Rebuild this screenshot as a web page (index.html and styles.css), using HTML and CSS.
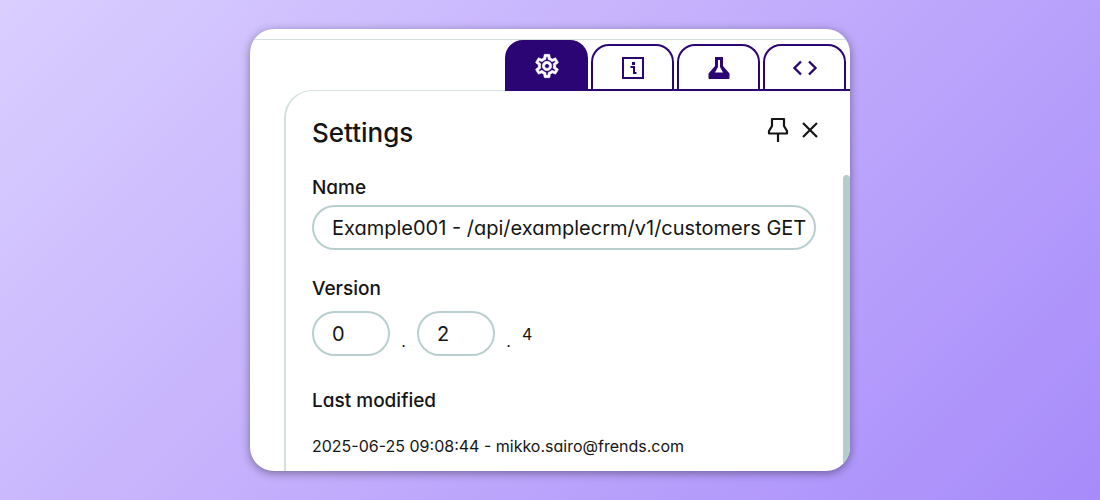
FILE: index.html
```html
<!DOCTYPE html>
<html lang="en">
<head>
  <meta charset="UTF-8">
  <title>Settings</title>
  <meta name="viewport" content="width=device-width, initial-scale=1">
  <link rel="stylesheet" href="styles.css">
</head>
<body>
  <main class="card">
    <nav class="top">
      <div class="tabs">
        <button class="tab active" type="button" aria-label="Settings">
          <svg width="28" height="28" viewBox="0 0 24 24" fill="currentColor" stroke="currentColor" stroke-width=".5" stroke-linejoin="round"><path d="M19.43 12.98c.04-.32.07-.64.07-.98s-.03-.66-.07-.98l2.11-1.65c.19-.15.24-.42.12-.64l-2-3.46c-.09-.16-.26-.25-.44-.25-.06 0-.12.01-.17.03l-2.49 1c-.52-.4-1.08-.73-1.69-.98l-.38-2.65C14.46 2.18 14.25 2 14 2h-4c-.25 0-.46.18-.49.42l-.38 2.65c-.61.25-1.17.59-1.69.98l-2.49-1c-.06-.02-.12-.03-.18-.03-.17 0-.34.09-.43.25l-2 3.46c-.13.22-.07.49.12.64l2.11 1.65c-.04.32-.07.65-.07.98s.03.66.07.98l-2.11 1.65c-.19.15-.24.42-.12.64l2 3.46c.09.16.26.25.44.25.06 0 .12-.01.17-.03l2.49-1c.52.4 1.08.73 1.69.98l.38 2.65c.03.24.24.42.49.42h4c.25 0 .46-.18.49-.42l.38-2.65c.61-.25 1.17-.59 1.69-.98l2.49 1c.06.02.12.03.18.03.17 0 .34-.09.43-.25l2-3.46c.12-.22.07-.49-.12-.64l-2.11-1.65zm-1.98-1.71c.04.31.05.52.05.73s-.02.43-.05.73l-.14 1.13.89.7 1.08.84-.7 1.21-1.27-.51-1.04-.42-.9.68c-.43.32-.84.56-1.25.73l-1.06.43-.16 1.13-.2 1.35h-1.4l-.19-1.35-.16-1.13-1.06-.43c-.43-.18-.83-.41-1.23-.71l-.91-.7-1.06.43-1.27.51-.7-1.21 1.08-.84.89-.7-.14-1.13c-.03-.31-.05-.54-.05-.74s.02-.43.05-.73l.14-1.13-.89-.7-1.08-.84.7-1.21 1.27.51 1.04.42.9-.68c.43-.32.84-.56 1.25-.73l1.06-.43.16-1.13.2-1.35h1.39l.19 1.35.16 1.13 1.06.43c.43.18.83.41 1.23.71l.91.7 1.06-.43 1.27-.51.7 1.21-1.07.85-.89.7.14 1.13zM12 8c-2.21 0-4 1.79-4 4s1.79 4 4 4 4-1.79 4-4-1.79-4-4-4zm0 6c-1.1 0-2-.9-2-2s.9-2 2-2 2 .9 2 2-.9 2-2 2z"/></svg>
        </button>
        <button class="tab" type="button" aria-label="Info">
          <svg width="24" height="24" viewBox="0 0 24 24" fill="none" stroke="currentColor" stroke-width="2"><path d="M2 2h20v20H2z"/><path d="M9.500 11H13v7M12 17h3.500"/><path d="M11 6h3v3h-3z" fill="currentColor" stroke="none"/></svg>
        </button>
        <button class="tab" type="button" aria-label="Test">
          <svg width="24" height="24" viewBox="0 0 24 24" fill="currentColor"><path fill-rule="evenodd" d="M8 1h8v9l6.500 7.500V22a1 1 0 0 1-1 1h-19a1 1 0 0 1-1-1v-4.500L8 10zM11 4v7l-3 5.500h8L13 11V4z"/></svg>
        </button>
        <button class="tab" type="button" aria-label="Code">
          <svg width="26" height="24" viewBox="0 0 26 24" fill="none" stroke="currentColor" stroke-width="2.400"><path d="M9 5.500 2.500 12 9 18.500M17 5.500l6.500 6.500-6.500 6.500"/></svg>
        </button>
      </div>
    </nav>

    <section class="panel">
      <header class="panel-header">
        <h1>Settings</h1>
        <div class="actions">
          <button class="icon-btn" type="button" aria-label="Pin">
            <svg width="22" height="26" viewBox="0 0 22 26" fill="none" stroke="currentColor" stroke-width="2.200" stroke-linejoin="round"><path d="M5 2h12v7l3 5v2.500H2V14l3-5zM11 16.500V25"/></svg>
          </button>
          <button class="icon-btn" type="button" aria-label="Close">
            <svg width="16" height="16" viewBox="0 0 16 16" fill="none" stroke="currentColor" stroke-width="2.200"><path d="M1 1l14 14M15 1L1 15"/></svg>
          </button>
        </div>
      </header>

      <div class="panel-body">
        <form class="form">
          <div class="field">
            <label for="name">Name</label>
            <input class="box" type="text" id="name" value="Example001 - /api/examplecrm/v1/customers GET">
          </div>

          <div class="field">
            <label for="major">Version</label>
            <div class="version">
              <input class="box short" type="text" id="major" value="0">
              <span class="dot">.</span>
              <input class="box short" type="text" id="minor" value="2" aria-label="Minor version">
              <span class="dot">.</span>
              <span class="patch">4</span>
            </div>
          </div>

          <div class="modified">
            <h2>Last modified</h2>
            <p>2025-06-25 09:08:44 - mikko.sairo@frends.com</p>
          </div>
        </form>
        <div class="scrollbar"></div>
      </div>
    </section>
  </main>
</body>
</html>
```
FILE: styles.css
```css
* {
  box-sizing: border-box;
}

body {
  margin: 0;
  min-height: 100vh;
  display: flex;
  align-items: center;
  justify-content: center;
  background: linear-gradient(135deg, #d9ceff, #c4b0fc 45%, #a78bfa);
  font-family: Inter, "Liberation Sans", sans-serif;
  font-feature-settings: "cv11";
  color: #151515;
}

button, input {
  font: inherit;
  font-feature-settings: inherit;
  color: inherit;
}

h1, h2, p {
  margin: 0;
}

.card {
  width: 100%;
  max-width: 600px;
  padding-top: 10px;
  background: #fff;
  border-radius: 24px;
  overflow: hidden;
  box-shadow: 0 2px 10px rgba(0, 0, 0, 0.4);
}

/* tabs */
.top {
  display: flex;
  justify-content: flex-end;
  border-top: 1px solid #d3e0e0;
}

.tabs {
  position: relative;
  z-index: 1;
  display: flex;
  align-items: flex-end;
  gap: 3px;
  padding-right: 4px;
  border-bottom: 2px solid #2b0573;
}

.tab {
  display: flex;
  align-items: center;
  justify-content: center;
  width: 83px;
  height: 45px;
  padding: 0;
  border: 2px solid #2b0573;
  border-bottom: 0;
  border-radius: 18px 18px 0 0;
  background: #fff;
  color: #2b0573;
}

.tab.active {
  height: 49px;
  background: #2b0573;
  color: #fff;
}

/* panel */
.panel {
  margin: -1px 0 0 34px;
  border: solid #d3e0e0;
  border-width: 1px 0 0 2px;
  border-top-left-radius: 28px;
}

.panel-header {
  display: flex;
  align-items: flex-start;
  justify-content: space-between;
  padding: 26px 32px 26px 26px;
}

h1 {
  font-size: 26px;
  font-weight: 500;
  line-height: 32px;
}

.actions {
  display: flex;
  align-items: center;
  gap: 13px;
}

.icon-btn {
  display: flex;
  padding: 0;
  border: 0;
  background: none;
}

.panel-body {
  display: flex;
}

.scrollbar {
  width: 7px;
  border-radius: 4px 4px 0 0;
  background: #b4cccc;
}

.form {
  flex: 1;
  min-width: 0;
  padding: 0 27px 13px 26px;
}

.field {
  margin-bottom: 26px;
}

label, h2 {
  display: block;
  font-size: 19px;
  font-weight: 500;
  line-height: 26px;
}

.box {
  display: block;
  width: 100%;
  height: 45px;
  margin-top: 4px;
  padding: 0 8px 0 18px;
  border: 2px solid #b9cfcf;
  border-radius: 23px;
  background: #fff;
  font-size: 20px;
}

.short {
  width: 78px;
}

.version {
  display: flex;
  align-items: center;
  padding-top: 5px;
}

.dot {
  width: 27px;
  padding-top: 18px;
  text-align: center;
  font-size: 16px;
}

.patch {
  padding-top: 4px;
  font-size: 16px;
}

.modified {
  padding-top: 6px;
}

.modified p {
  margin-top: 20px;
  font-size: 16px;
  line-height: 24px;
}
```
